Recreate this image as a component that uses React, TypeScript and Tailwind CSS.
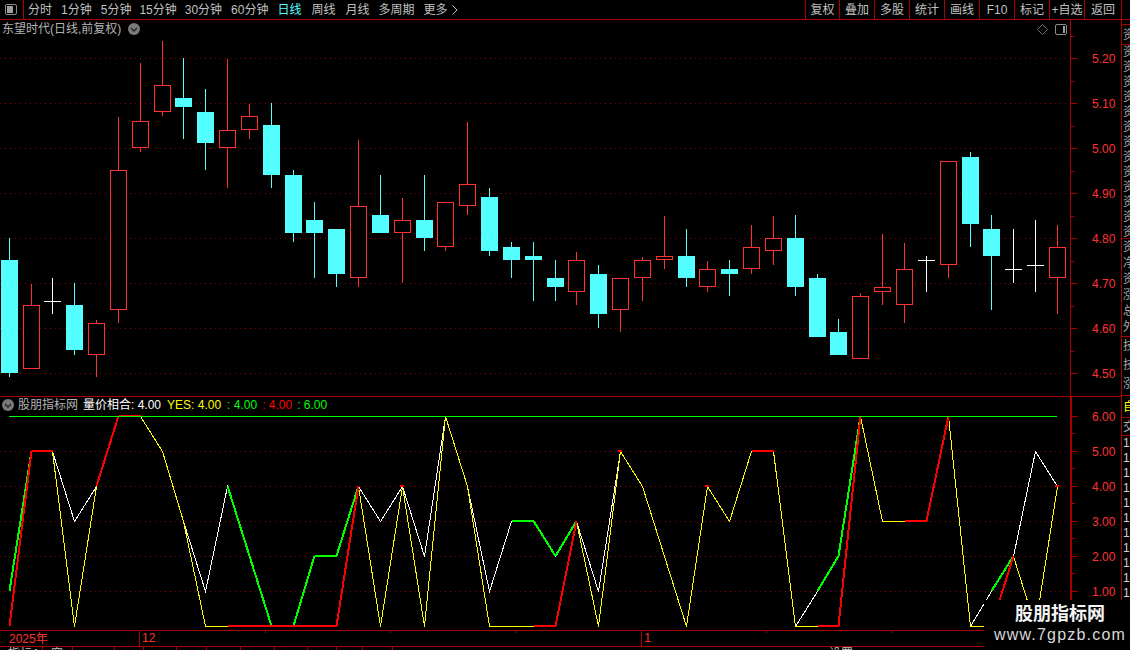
const FONT = "font-['Liberation_Sans','Noto_Sans_CJK_SC',sans-serif]"

const RED = '#ff3232'
const CYAN = '#54ffff'
const LINE = '#aa0000'

// x, high, body top, body bottom, low, kind
type Candle = [number, number, number, number, number, 'r' | 'c' | 'w']
const candles: Candle[] = [
  [9, 238, 260, 373, 377, 'c'],
  [31, 284, 305, 369, 369, 'r'],
  [52, 278, 301, 301, 314, 'w'],
  [74, 283, 305, 350, 355, 'c'],
  [96, 320, 323, 355, 377, 'r'],
  [118, 117, 170, 310, 323, 'r'],
  [140, 63, 121, 148, 152, 'r'],
  [162, 41, 85, 112, 116, 'r'],
  [183, 58, 98, 107, 139, 'c'],
  [205, 89, 112, 143, 170, 'c'],
  [227, 59, 130, 148, 188, 'r'],
  [249, 104, 116, 130, 139, 'r'],
  [271, 103, 125, 175, 188, 'c'],
  [293, 170, 175, 233, 242, 'c'],
  [314, 202, 220, 233, 278, 'c'],
  [336, 229, 229, 274, 287, 'c'],
  [358, 140, 206, 278, 287, 'r'],
  [380, 175, 215, 233, 233, 'c'],
  [402, 198, 220, 233, 283, 'r'],
  [424, 175, 220, 238, 251, 'c'],
  [445, 202, 202, 247, 251, 'r'],
  [467, 122, 184, 206, 215, 'r'],
  [489, 188, 197, 251, 256, 'c'],
  [511, 242, 247, 260, 278, 'c'],
  [533, 242, 256, 260, 301, 'c'],
  [555, 260, 278, 287, 301, 'c'],
  [576, 252, 260, 292, 305, 'r'],
  [598, 265, 274, 314, 328, 'c'],
  [620, 278, 278, 310, 332, 'r'],
  [642, 257, 260, 278, 301, 'r'],
  [664, 216, 256, 260, 269, 'r'],
  [686, 229, 256, 278, 287, 'c'],
  [707, 261, 269, 287, 292, 'r'],
  [729, 260, 269, 274, 296, 'c'],
  [751, 225, 247, 269, 274, 'r'],
  [773, 216, 238, 251, 265, 'r'],
  [795, 215, 238, 287, 296, 'c'],
  [817, 274, 278, 337, 337, 'c'],
  [838, 319, 332, 355, 355, 'c'],
  [860, 293, 296, 359, 359, 'r'],
  [882, 234, 287, 292, 305, 'r'],
  [904, 243, 269, 305, 323, 'r'],
  [926, 256, 260, 260, 292, 'w'],
  [948, 161, 161, 265, 278, 'r'],
  [970, 152, 157, 224, 247, 'c'],
  [991, 215, 229, 256, 310, 'c'],
  [1013, 229, 269, 269, 283, 'w'],
  [1035, 220, 265, 265, 292, 'w'],
  [1057, 225, 247, 278, 314, 'r'],
]

const seriesA = [1, 5, 5, 3, 4, 6, 6, 5, 3, 1, 4, 2, 0, 0, 2, 2, 4, 3, 4, 2, 6, 4, 1, 3, 3, 2, 3, 1, 5, 4, 2, 0, 4, 3, 5, 5, 0, 1, 2, 6, 3, 3, 3, 6, 0, 1, 2, 5, 4]
const seriesB = [0, 5, 5, 0, 4, 6, 6, 5, 3, 0, 0, 0, 0, 0, 0, 0, 4, 0, 4, 0, 6, 4, 0, 0, 0, 0, 3, 0, 5, 4, 2, 0, 4, 3, 5, 5, 0, 0, 0, 6, 3, 3, 3, 6, 0, 0, 2, 0, 4]
// segments (by start index) drawn thick
const greenSegs = [0, 10, 11, 13, 14, 15, 23, 24, 25, 37, 38, 45]
const redSegs = [0, 1, 4, 5, 10, 11, 12, 13, 14, 15, 24, 25, 34, 37, 38, 41, 42, 45]

const valY = (v: number) => 626.5 - 35 * v
const lineX = (i: number) => candles[i][0] + 0.5

const polyline = (vals: number[]) =>
  vals.map((v, i) => `${lineX(i)},${valY(v)}`).join(' ')

const Segs = ({ vals, segs, color }: { vals: number[]; segs: number[]; color: string }) => (
  <>
    {segs.map((i) => (
      <line
        key={i}
        x1={lineX(i)}
        y1={valY(vals[i]) - 0.5}
        x2={lineX(i + 1)}
        y2={valY(vals[i + 1]) - 0.5}
        stroke={color}
        strokeWidth={2}
      />
    ))}
  </>
)

const CandleMark = ({ c }: { c: Candle }) => {
  const [x, hi, top, bot, lo, kind] = c
  if (kind === 'w') {
    return (
      <g fill="#fff">
        <rect x={x} y={hi} width={1} height={lo - hi} />
        <rect x={x - 8} y={top} width={17} height={1} />
      </g>
    )
  }
  const color = kind === 'c' ? CYAN : RED
  return (
    <g>
      <rect x={x} y={hi} width={1} height={lo - hi} fill={color} />
      {kind === 'c' ? (
        <rect x={x - 8} y={top} width={17} height={bot - top} fill={color} />
      ) : (
        <rect x={x - 7.5} y={top + 0.5} width={16} height={bot - top - 1} fill="#000" stroke={color} />
      )}
    </g>
  )
}

const SplitIcon = ({ side }: { side: 'l' | 'r' }) => (
  <svg width="12" height="11" viewBox="0 0 12 11">
    <rect x="0.5" y="0.5" width="11" height="10" rx="1.5" fill="none" stroke="#8c8c8c" />
    <rect x={side === 'l' ? 2 : 8} y="2" width={side === 'l' ? 6 : 2} height="7" fill="#a0a0a0" />
  </svg>
)

const RoundChevron = () => (
  <svg width="12" height="12" viewBox="0 0 12 12">
    <circle cx="6" cy="6" r="6" fill="#7a7a7a" />
    <path d="M3 5 L6 8 L9 5" fill="none" stroke="#222" strokeWidth="1.4" />
  </svg>
)

const navItems = [
  { label: '分时', className: 'ml-[4px] mr-[9px]' },
  { label: '1分钟', className: 'mr-[9px]' },
  { label: '5分钟', className: 'mr-[8px]' },
  { label: '15分钟', className: 'mr-[8px]' },
  { label: '30分钟', className: 'mr-[9px]' },
  { label: '60分钟', className: 'mr-[9px]' },
  { label: '日线', className: 'mr-[10px] text-[#54ffff]' },
  { label: '周线', className: 'mr-[10px]' },
  { label: '月线', className: 'mr-[9px]' },
  { label: '多周期', className: 'mr-[9px]' },
  { label: '更多', className: 'mr-[4px]' },
]

const tools = [
  { label: '复权', className: 'w-[34px]' },
  { label: '叠加', className: 'w-[35px]' },
  { label: '多股', className: 'w-[35px]' },
  { label: '统计', className: 'w-[35px]' },
  { label: '画线', className: 'w-[35px]' },
  { label: 'F10', className: 'w-[35px]' },
  { label: '标记', className: 'w-[35px]' },
  { label: '+自选', className: 'w-[35px]' },
  { label: '返回', className: 'w-[37px]' },
]

const TopBar = () => (
  <div className="flex h-[20px] shrink-0 border-b border-[#aa0000] text-[12px] text-[#c0c0c0]">
    <div className="flex w-[24px] items-center justify-center border-r border-[#aa0000] pr-px">
      <SplitIcon side="l" />
    </div>
    <div className="flex flex-1 items-center whitespace-nowrap">
      {navItems.map((n) => (
        <span key={n.label} className={n.className}>
          {n.label}
        </span>
      ))}
      <svg width="6" height="10" viewBox="0 0 6 10">
        <path d="M0.5 0.5 L5 5 L0.5 9.5" fill="none" stroke="#c0c0c0" />
      </svg>
    </div>
    <div className="flex">
      {tools.map((t) => (
        <div key={t.label} className={`flex items-center justify-center whitespace-nowrap border-l border-[#aa0000] ${t.className}`}>
          {t.label}
        </div>
      ))}
    </div>
    <div className="w-[9px] border-l border-[#aa0000]" />
  </div>
)

const gridY = [58, 103, 148, 193, 238, 283, 328, 373]

const MainPane = () => (
  <div className="relative h-[376px] w-[1070px]">
    <svg className="block" width="1070" height="376" viewBox="0 20 1070 376" shapeRendering="crispEdges">
      {gridY.map((y) => (
        <line key={y} x1="0" x2="1070" y1={y + 0.5} y2={y + 0.5} stroke="#8c0000" strokeDasharray="1 4" />
      ))}
      {candles.map((c) => (
        <CandleMark key={c[0]} c={c} />
      ))}
    </svg>
    <div className="absolute left-[2px] top-[1px] flex items-center gap-[7px] text-[12px] leading-[16px] text-[#b4b4b4]">
      <span>东望时代(日线,前复权)</span>
      <RoundChevron />
    </div>
    <div className="absolute right-[3px] top-[4px] flex items-center gap-[7px]">
      <svg width="11" height="11" viewBox="0 0 11 11">
        <path d="M5.5 0.5 L10.5 5.5 L5.5 10.5 L0.5 5.5 Z" fill="none" stroke="#6e6e6e" />
      </svg>
      <SplitIcon side="r" />
    </div>
  </div>
)

const IndicatorPane = () => (
  <div className="relative h-[233px] w-[1070px]">
    <svg className="block" width="1070" height="233" viewBox="0 397 1070 233" shapeRendering="crispEdges">
      {[451, 486, 521, 556, 591].map((y) => (
        <line key={y} x1="0" x2="1070" y1={y + 0.5} y2={y + 0.5} stroke="#8c0000" strokeDasharray="1 4" />
      ))}
      <polyline points={polyline(seriesA)} fill="none" stroke="#fff" />
      <polyline points={polyline(seriesB)} fill="none" stroke="#ffff00" />
      <Segs vals={seriesA} segs={greenSegs} color="#00ff00" />
      <Segs vals={seriesB} segs={redSegs} color="#ff0000" />
      {[
        [400, 486],
        [618, 451],
        [705, 486],
        [1055, 486],
      ].map(([x, y]) => (
        <rect key={x} x={x} y={y - 1} width={4} height={2} fill="#ff0000" />
      ))}
      <rect x="9" y="416" width="1048" height="1" fill="#00ff00" />
    </svg>
    <div className="absolute left-[2px] top-0 flex items-center whitespace-nowrap text-[12px] leading-[16px]">
      <RoundChevron />
      <span className="ml-[4px] text-[#b4b4b4]">股朋指标网</span>
      <span className="ml-[5px] text-white">量价相合: 4.00</span>
      <span className="ml-[6px] text-[#ffff00]">YES: 4.00</span>
      <span className="ml-[6px] text-[#00ff00]">: 4.00</span>
      <span className="ml-[5px] text-[#ff0000]">: 4.00</span>
      <span className="ml-[5px] text-[#00ff00]">: 6.00</span>
    </div>
  </div>
)

const PriceAxis = () => (
  <div className="relative flex-1 border-l border-[#aa0000] pt-[16px] text-[12px] text-[#ff3232]">
    <svg className="absolute left-0 top-0" width="8" height="376" viewBox="0 20 8 376" shapeRendering="crispEdges">
      {gridY.map((y) => (
        <g key={y}>
          <rect x="0" y={y} width="6" height="1" fill={LINE} />
          <rect x="0" y={y - 22} width="3" height="1" fill={LINE} />
        </g>
      ))}
    </svg>
    {['5.20', '5.10', '5.00', '4.90', '4.80', '4.70', '4.60', '4.50'].map((p) => (
      <div key={p} className="flex h-[45px] items-center pl-[21px]">
        {p}
      </div>
    ))}
  </div>
)

const IndicatorAxis = () => (
  <div className="relative flex-1 border-l-2 border-[#aa0000] pt-[2px] text-[12px] text-[#ff3232]">
    <svg className="absolute left-0 top-0" width="8" height="233" viewBox="0 397 8 233" shapeRendering="crispEdges">
      {[416, 451, 486, 521, 556, 591].map((y) => (
        <g key={y}>
          <rect x="0" y={y} width="6" height="1" fill={LINE} />
          <rect x="0" y={y + 17} width="3" height="1" fill={LINE} />
        </g>
      ))}
    </svg>
    {['6.00', '5.00', '4.00', '3.00', '2.00', '1.00'].map((p) => (
      <div key={p} className="flex h-[35px] items-center pl-[20px]">
        {p}
      </div>
    ))}
  </div>
)

const DateStrip = () => (
  <div className="relative flex h-[16px] shrink-0 items-center border-b border-[#aa0000] text-[12px] text-[#ff3232]">
    <span className="ml-[9px] w-[130px]">2025年</span>
    <span className="h-full border-l border-[#aa0000] pl-[2px] leading-[15px]">12</span>
    <span className="ml-[486px] h-full border-l border-[#aa0000] pl-[2px] leading-[15px]">1</span>
    {[265, 390, 516, 766, 891, 1016].map((x) => (
      <span key={x} className="absolute top-0 h-[2px] w-px bg-[#aa0000]" style={{ left: x }} />
    ))}
  </div>
)

const tabs = [
  { label: '指标A', className: 'w-[43px]' },
  { label: '窗', className: 'w-[30px]' },
  { label: '', className: 'w-[42px]' },
  { label: '', className: 'w-[29px]' },
  { label: '', className: 'w-[33px]' },
  { label: '', className: 'w-[30px]' },
  { label: '', className: 'w-[34px]' },
  { label: '', className: 'w-[34px]' },
  { label: '', className: 'w-[33px]' },
  { label: '', className: 'w-[29px]' },
  { label: '', className: 'w-[26px]' },
  { label: '', className: 'w-[30px]' },
]

const Tabs = () => (
  <div className="flex h-[3px] overflow-hidden text-[12px] leading-[15px] text-[#c0c0c0]">
    {tabs.map((t, i) => (
      <div key={i} className={`shrink-0 overflow-hidden whitespace-nowrap border-r border-[#aa0000] pl-[8px] ${t.className}`}>
        {t.label}
      </div>
    ))}
    <div className="ml-[436px] shrink-0 whitespace-nowrap">设置</div>
  </div>
)

const sideTop = ['资', '资', '资', '资', '资', '资', '资', '资', '资', '资', '资', '资', '资']
const sideMid = ['资', '净', '资', '涨', '总', '外']
const sideLow = ['技', '技', '涨']
const sideNums = ['1', '1', '1', '1', '1', '1', '1', '1', '1', '1', '1']

const SidePanel = () => (
  <div className="w-[8px] shrink-0 overflow-hidden whitespace-nowrap pl-px text-[12px] text-[#a8a8a8]">
    <div className="-ml-px h-[5px] border-b border-[#aa0000]" />
    <div className="-ml-px h-[20px] border-b border-[#aa0000] pl-px leading-[20px]">资</div>
    <div className="-ml-px h-[194px] border-b border-[#aa0000] pl-px">
      {sideTop.map((s, i) => (
        <div key={i} className="h-[15px] leading-[15px]">{s}</div>
      ))}
    </div>
    <div className="-ml-px h-[98px] border-b border-[#aa0000] pl-px">
      {sideMid.map((s, i) => (
        <div key={i} className="h-[16px] leading-[16px]">{s}</div>
      ))}
    </div>
    <div className="-ml-px h-[59px] border-b border-[#aa0000] pl-px">
      {sideLow.map((s, i) => (
        <div key={i} className="h-[19px] leading-[19px]">{s}</div>
      ))}
    </div>
    <div className="-ml-px h-[22px] border-b border-[#aa0000] pl-px leading-[22px] text-[#ffff00]">自</div>
    <div className="-ml-px h-[18px] border-b border-[#aa0000] pl-px leading-[18px]">交</div>
    {sideNums.map((s, i) => (
      <div key={i} className="h-[15px] leading-[15px] text-[#d0d0d0]">{s}</div>
    ))}
  </div>
)

const Watermark = () => (
  <div className="absolute bottom-0 right-0 flex h-[50px] w-[146px] flex-col items-center bg-black pl-[6px] pt-[4px]">
    <span className="text-[18px] font-bold leading-[21px] text-[#f4f4f4]">股朋指标网</span>
    <span className="text-[16px] leading-[20px] tracking-[1.2px] text-[#d8d8d8]">www.7gpzb.com</span>
  </div>
)

export default function App() {
  return (
    <div className={`relative flex h-[650px] w-[1130px] flex-col overflow-hidden bg-black ${FONT}`}>
      <TopBar />
      <div className="flex min-h-0 flex-1">
        <div className="w-[1122px] shrink-0 border-r border-[#aa0000]">
          <div className="flex h-[377px] border-b border-[#aa0000]">
            <MainPane />
            <PriceAxis />
          </div>
          <div className="flex h-[234px] border-b border-[#aa0000]">
            <IndicatorPane />
            <IndicatorAxis />
          </div>
          <DateStrip />
          <Tabs />
        </div>
        <SidePanel />
      </div>
      <Watermark />
    </div>
  )
}
